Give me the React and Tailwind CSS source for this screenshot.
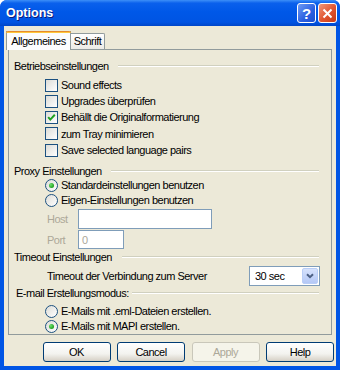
import React from "react";

const font = { fontFamily: '"Liberation Sans", Arial, sans-serif' };

const Heading = ({ children, labelW, className = "" }) => (
  <div className={`flex items-center h-[14px] pl-[5px] pr-[12px] ${className}`}>
    <span className={`whitespace-nowrap shrink-0 ${labelW}`}>{children}</span>
    <div className="flex-1 h-[2px] border-t border-t-[#D0D0BF] border-b border-b-white" />
  </div>
);

const Checkbox = ({ label, checked }) => (
  <div className="flex items-center h-[16.25px] pl-[36px]">
    <div className="w-[13px] h-[13px] border border-[#1C5180] bg-[linear-gradient(135deg,#dcdcd7,#ffffff)] flex items-center justify-center shrink-0">
      {checked && (
        <svg width="11" height="11" viewBox="0 0 11 11">
          <path d="M2.2 5.2 L4.3 7.6 L8.8 2.8" fill="none" stroke="#21A121" strokeWidth="2" />
        </svg>
      )}
    </div>
    <span className="ml-[3px] whitespace-nowrap">{label}</span>
  </div>
);

const Radio = ({ label, checked, className = "" }) => (
  <div className={`flex items-center h-[14px] pl-[36px] ${className}`}>
    <div className="w-[13px] h-[13px] rounded-full border border-[#1C5180] bg-[linear-gradient(135deg,#dcdcd7,#ffffff)] flex items-center justify-center shrink-0">
      {checked && (
        <div className="w-[5px] h-[5px] rounded-full bg-[radial-gradient(circle_at_35%_35%,#6ee06e,#21A121_70%)]" />
      )}
    </div>
    <span className="ml-[3px] whitespace-nowrap">{label}</span>
  </div>
);

const Button = ({ children, disabled }) => (
  <div
    className={`w-[68px] h-[20px] rounded-[3px] border flex items-center justify-center ${
      disabled
        ? "border-[#C9C7BA] bg-[#F5F4EA] text-[#ACA899]"
        : "border-[#003C74] bg-[linear-gradient(to_bottom,#ffffff,#f3f3ef_60%,#d6d0c5)] text-black"
    }`}
  >
    {children}
  </div>
);

export default function App() {
  return (
    <div
      className="w-[340px] h-[370px] flex flex-col bg-[#0055E5] rounded-t-[7px] overflow-hidden text-[11px] tracking-[-0.5px] text-black"
      style={font}
    >
      {/* title bar */}
      <div className="h-[26px] flex items-center pl-[6px] pr-[3px] bg-[linear-gradient(to_bottom,#3d8ff8_0%,#0a60ec_12%,#0058e8_45%,#0054e3_85%,#0046c8_100%)]">
        <span className="flex-1 text-white font-bold text-[12.5px] tracking-[0px] [text-shadow:1px_1px_#0a1a7a]">
          Options
        </span>
        <div className="w-[19px] h-[20px] rounded-[3px] border border-white bg-[linear-gradient(135deg,#6f9bf5,#2a5fe0_60%,#1d4fd0)] flex items-center justify-center text-white font-bold text-[15px] tracking-[0px] leading-none">
          ?
        </div>
        <div className="ml-[2px] w-[19px] h-[20px] rounded-[3px] border border-white bg-[linear-gradient(135deg,#f0977a,#e0542f_55%,#c73a16)] flex items-center justify-center">
          <svg width="11" height="11" viewBox="0 0 11 11">
            <path d="M1.5 1.5 L9.5 9.5 M9.5 1.5 L1.5 9.5" stroke="white" strokeWidth="2" />
          </svg>
        </div>
      </div>

      {/* client */}
      <div className="flex-1 flex px-[4px] pb-[4px]">
        <div className="flex-1 flex flex-col bg-[#ECE9D8] px-[4px] pt-[5px]">
          {/* tabs */}
          <div className="flex items-end h-[18px] ml-[-2px]">
            <div className="relative z-10 w-[65px] h-[19px] mb-[-1px] bg-[#FCFCFE] border-x border-[#919B9C] flex flex-col">
              <div className="h-[3px] bg-[#FFC83C] border-t border-[#E68B2C] rounded-t-[2px] mx-[-1px]" />
              <div className="flex-1 flex items-center justify-center pb-[1px]">Allgemeines</div>
            </div>
            <div className="w-[34px] h-[16px] border-t border-r border-[#919B9C] rounded-tr-[2px] bg-[linear-gradient(to_bottom,#ffffff,#ecebe6)] flex items-center justify-center">
              Schrift
            </div>
          </div>

          {/* panel */}
          <div className="h-[286px] border border-[#919B9C] flex flex-col">
            <Heading labelW="w-[104px]" className="mt-[9px]">Betriebseinstellungen</Heading>
            <div className="mt-[4px] flex flex-col">
              <Checkbox label="Sound effects" />
              <Checkbox label="Upgrades überprüfen" />
              <Checkbox label="Behällt die Originalformatierung" checked />
              <Checkbox label="zum Tray minimieren" />
              <Checkbox label="Save selected language pairs" />
            </div>

            <Heading labelW="w-[97px]" className="mt-[6px]">Proxy Einstellungen</Heading>
            <Radio label="Standardeinstellungen benutzen" checked />
            <Radio label="Eigen-Einstellungen benutzen" className="mt-[1px]" />
            <div className="flex items-center h-[20px] mt-[2px] pl-[38px] text-[#ACA899]">
              <span className="w-[31px]">Host</span>
              <div className="w-[134px] h-[20px] border border-[#7F9DB9] bg-white" />
            </div>
            <div className="flex items-center h-[19px] mt-[1px] pl-[38px] text-[#ACA899]">
              <span className="w-[31px]">Port</span>
              <div className="w-[46px] h-[19px] border border-[#7F9DB9] bg-white flex items-center pl-[3px]">0</div>
            </div>

            <Heading labelW="w-[108px]" className="mt-[1px]">Timeout Einstellungen</Heading>
            <div className="flex items-center justify-between h-[20px] mt-[2px] pl-[38px] pr-[11px]">
              <span>Timeout der Verbindung zum Server</span>
              <div className="w-[71px] h-[20px] border border-[#7F9DB9] bg-white flex items-center">
                <span className="flex-1 pl-[5px]">30 sec</span>
                <div className="w-[16px] h-[16px] mr-[1px] rounded-[2px] border border-[#B9CEF7] bg-[linear-gradient(to_bottom,#d6e2fc,#b4c8f6)] flex items-center justify-center">
                  <svg width="8" height="6" viewBox="0 0 8 6">
                    <path d="M1 1.2 L4 4.2 L7 1.2" fill="none" stroke="#4D6185" strokeWidth="2" />
                  </svg>
                </div>
              </div>
            </div>

            <Heading labelW="w-[116px]" className="pl-[7px]">E-mail Erstellungsmodus:</Heading>
            <Radio label="E-Mails mit .eml-Dateien erstellen." className="mt-[4px]" />
            <Radio label="E-Mails mit MAPI erstellen." className="mt-[1px]" checked />
          </div>

          {/* buttons */}
          <div className="flex justify-end gap-[6.5px] mt-[7px] mr-[-2px]">
            <Button>OK</Button>
            <Button>Cancel</Button>
            <Button disabled>Apply</Button>
            <Button>Help</Button>
          </div>
        </div>
      </div>
    </div>
  );
}
